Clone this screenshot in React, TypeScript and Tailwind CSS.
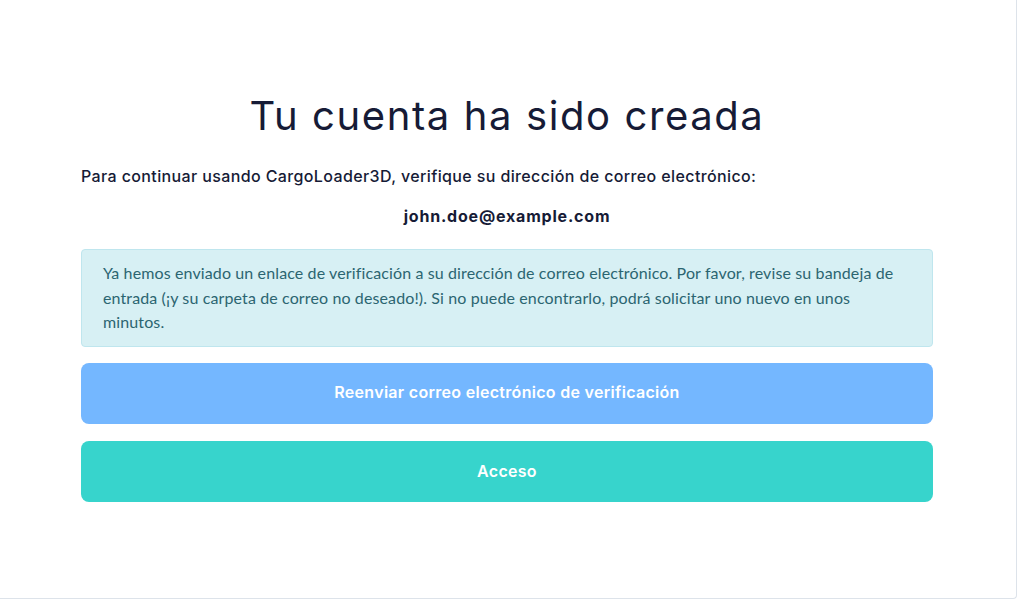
export default function App() {
  return (
    <div className="w-[1018px] h-[600px] bg-white" style={{ fontFamily: "Inter, 'Noto Sans', sans-serif" }}>
      <div className="w-[1017px] h-[599px] border-r border-b border-[#dde3ea] rounded-br-[4px] bg-white">
        <div className="pt-[92px] pl-[81px] w-[933px]">
          {/* Header */}
          <h1 className="text-center text-[40px] leading-[48px] font-normal text-[#161b36] tracking-[1.6px]">
            Tu cuenta ha sido creada
          </h1>
          <p className="mt-[24px] text-[16px] leading-[24px] font-medium text-[#161b36] tracking-[0.38px]">
            Para continuar usando CargoLoader3D, verifique su dirección de correo electrónico:
          </p>
          <p className="mt-[16px] text-center text-[16px] leading-[24px] font-bold text-[#161b36] tracking-[0.8px]">
            john.doe@example.com
          </p>

          {/* Notice */}
          <div
            className="mt-[21px] h-[98px] rounded-[4px] border border-[#bfe6ee] bg-[#d7f0f4] px-[21px] pt-[11px] text-[16px] leading-[24.5px] tracking-[0.12px] text-[#2b6571]"
            style={{ fontFamily: "Lato, 'Open Sans', sans-serif" }}
          >
            Ya hemos enviado un enlace de verificación a su dirección de correo electrónico. Por favor, revise su bandeja de
            <br />
            entrada (¡y su carpeta de correo no deseado!). Si no puede encontrarlo, podrá solicitar uno nuevo en unos
            <br />
            minutos.
          </div>

          {/* Actions */}
          <div className="mt-[16px] flex flex-col gap-[17px]">
            <button className="h-[61px] w-full rounded-[8px] bg-[#74b7ff] pb-[3px] text-[16px] font-semibold text-white tracking-[0.3px]">
              Reenviar correo electrónico de verificación
            </button>
            <button className="h-[61px] w-full rounded-[8px] bg-[#37d4cc] pb-[2px] text-[16px] font-semibold text-white tracking-[0.3px]">
              Acceso
            </button>
          </div>
        </div>
      </div>
    </div>
  );
}
